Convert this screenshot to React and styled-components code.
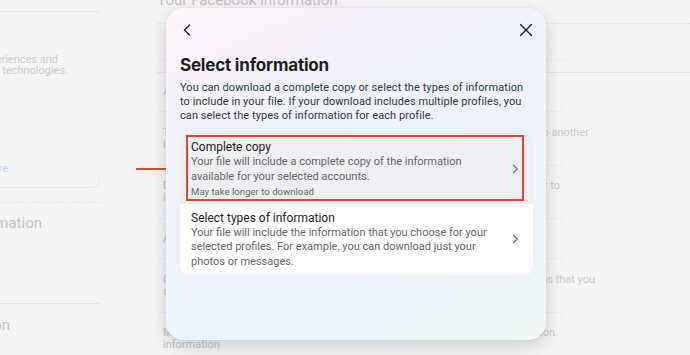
import styled, { createGlobalStyle } from "styled-components";

const GlobalStyle = createGlobalStyle`
  html, body {
    margin: 0;
    padding: 0;
    background: #f4f4f4;
    overflow: hidden;
  }
  body {
    font-family: Roboto, "Noto Sans", sans-serif;
    -webkit-font-smoothing: antialiased;
  }
`;

// rows of the faded list behind the dialog; end = gap between the description and the window's right edge
const backgroundRows = [
  { title: "Accounts", desc: "", end: 130, height: 39 },
  { title: "Transfer a copy of information", desc: "Transfer a copy of your photos and videos to another", end: 101, height: 54 },
  { title: "Download your information", desc: "Download a copy of your information to keep, or to", end: 130, height: 53 },
  { title: "Activity log", desc: "", end: 130, height: 40 },
  { title: "Off-Facebook activity", desc: "View or clear activity from businesses and organisations that you", end: 95, height: 54 },
  { title: "Manage your information", desc: "Learn more about how you can manage your information.", end: 132, height: 52 },
];

function ChevronLeft() {
  return (
    <svg width="14" height="14" viewBox="0 0 14 14" fill="none">
      <path d="M9.6 2L4.4 7l5.2 5" stroke="#1c1e21" strokeWidth="1.3" strokeLinecap="round" strokeLinejoin="round" />
    </svg>
  );
}

function CloseIcon() {
  return (
    <svg width="14" height="14" viewBox="0 0 14 14" fill="none">
      <path d="M1.5 1.5l11 11M12.5 1.5l-11 11" stroke="#1c1e21" strokeWidth="1.3" strokeLinecap="round" />
    </svg>
  );
}

function ChevronRight() {
  return (
    <svg width="8" height="10" viewBox="0 0 8 10" fill="none">
      <path d="M2.3 1.2L6.2 5 2.3 8.8" stroke="#65676b" strokeWidth="1.1" strokeLinecap="round" strokeLinejoin="round" />
    </svg>
  );
}

function App() {
  return (
    <>
      <GlobalStyle />
      <Page>
        <Sidebar>
          <SideRule />
          <SideText $top={42} $inset={42}><span>Learn how we use your information to personalise your experiences and</span></SideText>
          <SideText $inset={32}><span>to improve our products and to develop beta technologies.</span></SideText>
          <SideLink><span>Learn more</span></SideLink>
          <SideCardEnd />
          <SideDashed />
          <SideHeading $top={11} $inset={58}><span>Your information</span></SideHeading>
          <SideRule $top={71} />
          <SideHeading $top={12} $inset={90}><span>Your permission</span></SideHeading>
        </Sidebar>

        <Main>
          <MainHeading>Your Facebook information</MainHeading>
          <DottedRule />
          <ShortRule />
          <FullRule />
          {backgroundRows.map((row) => (
            <BgRow key={row.title} $height={row.height}>
              <BgLine>
                <BgTitle>{row.title}</BgTitle>
                <BgDesc $end={row.end}><span>{row.desc}</span></BgDesc>
              </BgLine>
            </BgRow>
          ))}
        </Main>
      </Page>

      <Arrow width="52" height="12" viewBox="0 0 52 12">
        <path d="M0 6h44" stroke="#e8472e" strokeWidth="2" />
        <path d="M42 1.5L50 6l-8 4.5z" fill="#e8472e" />
      </Arrow>

      <Modal>
        <ModalHeader>
          <IconButton><ChevronLeft /></IconButton>
          <IconButton><CloseIcon /></IconButton>
        </ModalHeader>
        <Title>Select information</Title>
        <Intro>
          You can download a complete copy or select the types of information
          to include in your file. If your download includes multiple profiles, you
          can select the types of information for each profile.
        </Intro>

        <OptionList>
          <Option $active>
            <OptionBody>
              <OptionTitle>Complete copy</OptionTitle>
              <OptionDesc>
                Your file will include a complete copy of the information
                available for your selected accounts.
              </OptionDesc>
              <OptionNote>May take longer to download</OptionNote>
            </OptionBody>
            <ChevronRight />
          </Option>
          <Option>
            <OptionBody>
              <OptionTitle>Select types of information</OptionTitle>
              <OptionDesc>
                Your file will include the information that you choose for your
                selected profiles. For example, you can download just your
                photos or messages.
              </OptionDesc>
            </OptionBody>
            <ChevronRight />
          </Option>
        </OptionList>
      </Modal>
    </>
  );
}

/* ---------- faded page behind the dialog ---------- */

const Page = styled.div`
  display: flex;
  width: 690px;
  height: 355px;
  overflow: hidden;
  color: #c9c9c9;
`;

const Sidebar = styled.div`
  display: flex;
  flex-direction: column;
  flex: none;
  width: 300px;
  margin-left: -200px;
  padding-top: 11px;
`;

const SideRule = styled.div`
  flex: none;
  margin-top: ${(p) => p.$top || 0}px;
  height: 1px;
  background: #e6e6e6;
`;

// right-aligned, overflowing to the left past the window edge
const RightLine = styled.div`
  display: flex;
  flex: none;
  justify-content: flex-end;
  white-space: nowrap;
`;

const SideText = styled(RightLine)`
  margin-top: ${(p) => p.$top || 0}px;
  padding-right: ${(p) => p.$inset}px;
  font-size: 11px;
  line-height: 11px;
  color: #cdcdcd;
`;

const SideLink = styled(RightLine)`
  margin-top: 87px;
  padding-right: 92px;
  font-size: 11px;
  line-height: 12px;
  color: #c2d2ee;
`;

const SideCardEnd = styled.div`
  flex: none;
  height: 12px;
  border: 1px solid #e8e8e8;
  border-top: none;
  border-radius: 0 0 8px 8px;
`;

const SideDashed = styled.div`
  flex: none;
  margin-top: 14px;
  border-top: 1px dashed #e6e6e6;
`;

const SideHeading = styled(RightLine)`
  margin-top: ${(p) => p.$top}px;
  padding-right: ${(p) => p.$inset}px;
  font-size: 15px;
  line-height: 18px;
  color: #c6c6c6;
`;

const Main = styled.div`
  display: flex;
  flex-direction: column;
  flex: 1;
  min-width: 0;
  padding-left: 57px;
`;

const MainHeading = styled.div`
  flex: none;
  margin-top: -10px;
  font-size: 15px;
  line-height: 20px;
  color: #c3c3c3;
`;

const DottedRule = styled.div`
  flex: none;
  margin-top: 13px;
  border-top: 1px dotted #e2e2e2;
`;

const ShortRule = styled.div`
  flex: none;
  margin-top: 36px;
  margin-right: 122px;
  height: 1px;
  background: #ececec;
`;

const FullRule = styled.div`
  flex: none;
  margin-top: 11px;
  height: 1px;
  background: #e6e6e6;
`;

const BgRow = styled.div`
  display: flex;
  flex: none;
  align-items: center;
  height: ${(p) => p.$height}px;
  box-sizing: border-box;
  padding-left: 6px;
  border-bottom: 1px solid #ececec;
  margin-right: 127px;
  font-size: 11px;
  line-height: 12px;
`;

const BgLine = styled.div`
  display: flex;
  align-items: baseline;
  flex: 1;
  min-width: 0;
`;

const BgTitle = styled.div`
  flex: none;
  width: 100px;
  color: #c4c4c4;
`;

const BgDesc = styled(RightLine)`
  flex: 1;
  min-width: 0;
  margin-right: ${(p) => p.$end - 127}px;
  color: #cbcbcb;
`;

/* ---------- annotation arrow ---------- */

const Arrow = styled.svg`
  position: absolute;
  left: 136px;
  top: 163px;
`;

/* ---------- dialog ---------- */

const Modal = styled.div`
  position: absolute;
  left: 166px;
  top: 8px;
  width: 380px;
  height: 332px;
  box-sizing: border-box;
  padding: 12px 13px 0 14px;
  border-radius: 18px;
  background: linear-gradient(155deg, #fbf4f7 0%, #f1f2fb 35%, #eef3fc 65%, #eff6f3 100%);
  box-shadow: 0 6px 18px rgba(0, 0, 0, 0.16), 0 0 2px rgba(0, 0, 0, 0.08);
  color: #1c1e21;
`;

const ModalHeader = styled.div`
  display: flex;
  justify-content: space-between;
  align-items: center;
  height: 20px;
`;

const IconButton = styled.div`
  display: flex;
  align-items: center;
  justify-content: center;
  width: 20px;
  height: 20px;
  margin: 0 -3px;
`;

const Title = styled.h2`
  margin: 14px 0 0 0;
  font-family: Inter, Roboto, sans-serif;
  font-size: 17px;
  line-height: 22px;
  font-weight: 700;
  letter-spacing: -0.2px;
`;

const Intro = styled.p`
  margin: 5px 0 0 0;
  font-size: 11px;
  line-height: 13.8px;
  letter-spacing: 0.08px;
  color: #2c3b45;
`;

const OptionList = styled.div`
  display: flex;
  flex-direction: column;
  margin-top: 11px;
  border-radius: 8px;
  overflow: hidden;
  background: #ffffff;
`;

const Option = styled.div`
  position: relative;
  display: flex;
  align-items: center;
  gap: 10px;
  padding: 6px 14px 5px 11px;
  background: ${(p) => (p.$active ? "#efeff1" : "#ffffff")};

  &::after {
    content: "";
    display: ${(p) => (p.$active ? "block" : "none")};
    position: absolute;
    left: 6px;
    right: 9px;
    top: 2px;
    bottom: 3px;
    border: 2px solid #e3452f;
  }
`;

const OptionBody = styled.div`
  flex: 1;
`;

const OptionTitle = styled.div`
  font-size: 12px;
  line-height: 16px;
  color: #1c1e21;
`;

const OptionDesc = styled.div`
  font-size: 11px;
  line-height: 14.6px;
  color: #65676b;
`;

const OptionNote = styled.div`
  font-size: 9.6px;
  line-height: 14px;
  color: #65676b;
`;

export default App;
